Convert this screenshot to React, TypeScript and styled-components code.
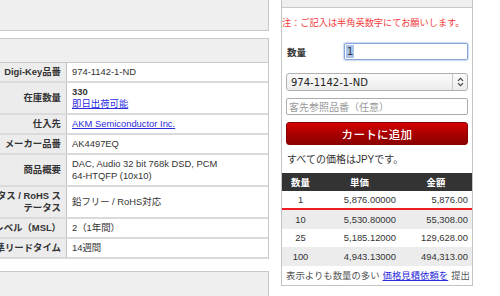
import React from "react";
import styled, { createGlobalStyle } from "styled-components";

const Global = createGlobalStyle`
  html, body { margin: 0; padding: 0; background: #fff; overflow: hidden; }
  body { font-family: "Liberation Sans", "Noto Sans CJK JP", sans-serif; color: #333; }
  * { box-sizing: border-box; }
`;

const Page = styled.div`
  display: flex;
  align-items: flex-start;
  gap: 12px;
  width: 600px;
  height: 296px;
`;

const LeftCol = styled.div`
  width: 349px;
  margin-left: -80px;
  flex-shrink: 0;
  display: flex;
  flex-direction: column;
`;

const GrayBox = styled.div<{ $h: number; $mt?: number }>`
  height: ${(p) => p.$h}px;
  margin-top: ${(p) => p.$mt ?? 0}px;
  background: #efefef;
  border: 1px solid #c9c9c9;
  border-left: none;
`;

const TopBox = styled(GrayBox)`
  border-top: none;
`;

const SectionHead = styled(GrayBox)`
  border-bottom: none;
`;

const AttrTable = styled.div`
  display: grid;
  grid-template-columns: 147px 1fr;
  border-top: 1px solid #c9c9c9;
  border-right: 1px solid #c9c9c9;
  font-size: 9.4px;
  line-height: 12px;
`;

const Label = styled.div`
  background: #ececec;
  font-weight: bold;
  text-align: right;
  white-space: nowrap;
  padding: 3px 5px;
  border-right: 1px solid #c4c4c4;
  border-bottom: 2px solid #dadada;
  display: flex;
  align-items: center;
  justify-content: flex-end;
  color: #333;
`;

const Value = styled.div`
  padding: 3px 5px;
  border-bottom: 2px solid #dadada;
  display: flex;
  flex-direction: column;
  justify-content: center;
  color: #333;
`;

const Strong = styled.span`
  font-weight: bold;
`;

const Link = styled.a`
  color: #2b2be0;
  text-decoration: underline;
`;

const RightCol = styled.div`
  width: 192px;
  flex-shrink: 0;
  border: 1px solid #c4c4c4;
  border-top: none;
  display: flex;
  flex-direction: column;
`;

const PanelHead = styled.div`
  height: 8px;
  background: #efefef;
  border-bottom: 1px solid #c9c9c9;
`;

const Note = styled.div`
  color: #f23b3b;
  font-size: 9.2px;
  line-height: 12px;
  margin-top: 9px;
  white-space: nowrap;
  padding-left: 0;
`;

const Form = styled.div`
  padding: 0 4px;
  display: flex;
  flex-direction: column;
`;

const QtyRow = styled.div`
  display: flex;
  align-items: center;
  margin-top: 14px;
  padding-left: 1px;
`;

const QtyLabel = styled.div`
  font-weight: bold;
  font-size: 9.6px;
  width: 57px;
`;

const QtyInput = styled.div`
  width: 125px;
  height: 17px;
  border: 1px solid #86a5d9;
  border-radius: 2px;
  box-shadow: 0 0 1px 1px rgba(140, 170, 220, 0.45);
  display: flex;
  align-items: center;
  padding-left: 1px;
  font-family: "DejaVu Sans", sans-serif;
  font-size: 10.5px;
`;

const Selected = styled.span`
  background: #a9c4e8;
  color: #334;
  line-height: 13px;
  padding: 0 1px;
`;

const SelectBox = styled.div`
  margin-top: 13px;
  height: 18px;
  border: 1px solid #b0b0b0;
  border-radius: 3px;
  background: linear-gradient(#fbfbfb, #ececec);
  display: flex;
  align-items: center;
  font-family: "DejaVu Sans", sans-serif;
  font-size: 10px;
  color: #222;
`;

const SelectText = styled.div`
  flex: 1;
  padding-left: 4px;
`;

const SelectArrow = styled.div`
  width: 15px;
  height: 100%;
  border-left: 1px solid #c8c8c8;
  display: flex;
  align-items: center;
  justify-content: center;
`;

const TextInput = styled.div`
  margin-top: 7px;
  height: 17px;
  border: 1px solid #adadad;
  border-radius: 2px;
  display: flex;
  align-items: center;
  padding-left: 2px;
  font-size: 10px;
  color: #9a9a9a;
`;

const CartButton = styled.div`
  margin-top: 7px;
  height: 23px;
  border-radius: 3px;
  background: linear-gradient(#d40000, #a30000 60%, #8c0000);
  border: 1px solid #8a0000;
  color: #fff;
  font-size: 11.5px;
  font-weight: 500;
  display: flex;
  align-items: center;
  justify-content: center;
  letter-spacing: 0.3px;
`;

const Currency = styled.div`
  font-size: 10px;
  line-height: 12px;
  margin-top: 9px;
  padding-left: 5px;
  color: #333;
`;

const PriceTable = styled.div`
  margin-top: 7px;
  display: flex;
  flex-direction: column;
  font-size: 9.4px;
`;

const PriceRow = styled.div<{ $bg: string; $h: number; $red?: boolean; $head?: boolean }>`
  display: grid;
  grid-template-columns: 37px 81px 1fr;
  height: ${(p) => p.$h}px;
  align-items: center;
  background: ${(p) => p.$bg};
  color: ${(p) => (p.$head ? "#fff" : "#333")};
  font-weight: ${(p) => (p.$head ? "bold" : "normal")};
  border-bottom: ${(p) => (p.$red ? "2px solid #ee1c25" : "none")};
`;

const Cell = styled.div<{ $align: "center" | "right"; $head?: boolean }>`
  text-align: ${(p) => (p.$head ? "center" : p.$align)};
  padding-right: ${(p) => (p.$head || p.$align === "center" ? 0 : 4)}px;
`;

const Footer = styled.div`
  height: 19px;
  display: flex;
  align-items: center;
  padding-left: 4px;
  font-size: 9.4px;
  color: #555;
  white-space: nowrap;
`;

const FootLink = styled.a`
  color: #2b2be0;
  text-decoration: underline;
  margin: 0 3px;
`;

const attrs: { label: React.ReactNode; value: React.ReactNode }[] = [
  { label: "Digi-Key品番", value: "974-1142-1-ND" },
  {
    label: "在庫数量",
    value: (
      <>
        <Strong>330</Strong>
        <Link>即日出荷可能</Link>
      </>
    ),
  },
  { label: "仕入先", value: <Link>AKM Semiconductor Inc.</Link> },
  { label: "メーカー品番", value: "AK4497EQ" },
  {
    label: "商品概要",
    value: (
      <>
        <span>DAC, Audio 32 bit 768k DSD, PCM</span>
        <span>64-HTQFP (10x10)</span>
      </>
    ),
  },
  {
    label: (
      <span>
        鉛フリーステータス / RoHS ス
        <br />
        テータス
      </span>
    ),
    value: "鉛フリー / RoHS対応",
  },
  { label: "湿気感度レベル（MSL）", value: "2（1年間）" },
  { label: "メーカー標準リードタイム", value: "14週間" },
];

const prices = [
  ["1", "5,876.00000", "5,876.00"],
  ["10", "5,530.80000", "55,308.00"],
  ["25", "5,185.12000", "129,628.00"],
  ["100", "4,943.13000", "494,313.00"],
];

export default function App() {
  return (
    <>
      <Global />
      <Page>
        <LeftCol>
          <TopBox $h={31} />
          <SectionHead $h={24} $mt={7} />
          <AttrTable>
            {attrs.map((a, i) => (
              <React.Fragment key={i}>
                <Label>{a.label}</Label>
                <Value>{a.value}</Value>
              </React.Fragment>
            ))}
          </AttrTable>
          <GrayBox $h={32} $mt={12} />
        </LeftCol>
        <RightCol>
          <PanelHead />
          <Note>注：ご記入は半角英数字にてお願いします。</Note>
          <Form>
            <QtyRow>
              <QtyLabel>数量</QtyLabel>
              <QtyInput>
                <Selected>1</Selected>
              </QtyInput>
            </QtyRow>
            <SelectBox>
              <SelectText>974-1142-1-ND</SelectText>
              <SelectArrow>
                <svg width="7" height="10" viewBox="0 0 7 10">
                  <path d="M1 3.8 L3.5 1.3 L6 3.8 M1 6.2 L3.5 8.7 L6 6.2" fill="none" stroke="#444" strokeWidth="1.2" />
                </svg>
              </SelectArrow>
            </SelectBox>
            <TextInput>客先参照品番（任意）</TextInput>
            <CartButton>カートに追加</CartButton>
          </Form>
          <Currency>すべての価格はJPYです。</Currency>
          <PriceTable>
            <PriceRow $bg="#333" $h={18} $head>
              <Cell $align="center" $head>数量</Cell>
              <Cell $align="right" $head>単価</Cell>
              <Cell $align="right" $head>金額</Cell>
            </PriceRow>
            {prices.map((p, i) => (
              <PriceRow key={p[0]} $bg={i % 2 ? "#ececec" : "#fff"} $h={i === 0 ? 19 : 18.5} $red={i === 0}>
                <Cell $align="center">{p[0]}</Cell>
                <Cell $align="right">{p[1]}</Cell>
                <Cell $align="right">{p[2]}</Cell>
              </PriceRow>
            ))}
          </PriceTable>
          <Footer>
            表示よりも数量の多い<FootLink>価格見積依頼を</FootLink>提出
          </Footer>
        </RightCol>
      </Page>
    </>
  );
}
